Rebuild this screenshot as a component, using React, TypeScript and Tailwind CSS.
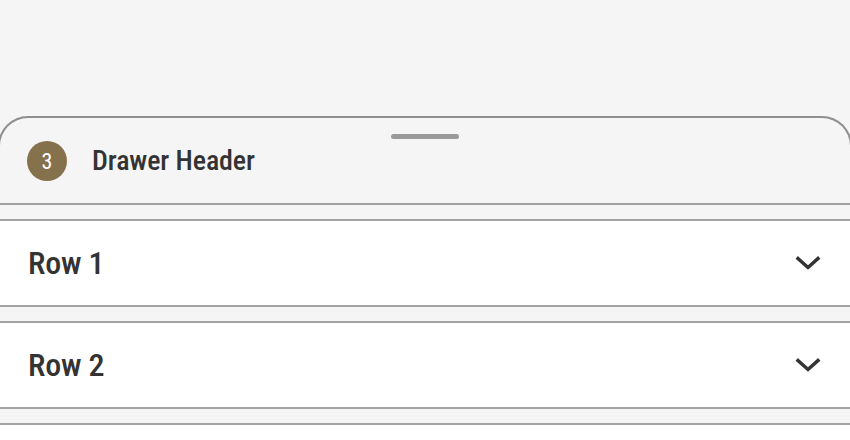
import React from 'react';

const Chevron = () => (
    <svg width="26" height="16" viewBox="0 0 26 16" fill="none" className="text-[#333]">
        <path d="M3 3.5 L13 12.5 L23 3.5" stroke="currentColor" strokeWidth="3.4" strokeLinecap="square" />
    </svg>
);

const Row = ({ label }: { label: string }) => (
    <div className="mt-[14px] flex h-[88px] items-center justify-between border-y-2 border-[#a3a3a3] bg-white pl-[28px] pr-[29px]">
        <span className="text-[32px] font-medium font-stretch-condensed text-[#333] tracking-[-0.2px]">{label}</span>
        <Chevron />
    </div>
);

export default function App() {
    return (
        <div className="h-[440px] w-[850px] overflow-hidden bg-[#f5f5f5] font-['Roboto',sans-serif]">
            <div className="h-[116px]" />
            <div className="-mx-[2px] rounded-t-[30px] border-t-2 border-x-2 border-[#8e8e8e] bg-[#f5f5f5]">
                <div className="flex h-[87px] flex-col border-b-2 border-[#a0a0a0]">
                    <div className="flex justify-center pt-[16px]">
                        <div className="h-[5px] w-[68px] rounded-full bg-[#9a9a9a]" />
                    </div>
                    <div className="mt-[1px] flex items-center gap-[25px] pl-[27px]">
                        <div className="flex h-[40px] w-[40px] items-center justify-center rounded-full bg-[#86714d] text-[22px] font-normal font-stretch-condensed text-white">
                            3
                        </div>
                        <span className="text-[28px] font-medium font-stretch-condensed text-[#333] tracking-[-0.1px]">Drawer Header</span>
                    </div>
                </div>
                <Row label="Row 1" />
                <Row label="Row 2" />
                <div className="mt-[14px] h-[30px] border-t-2 border-[#a3a3a3] bg-white" />
            </div>
        </div>
    );
}
